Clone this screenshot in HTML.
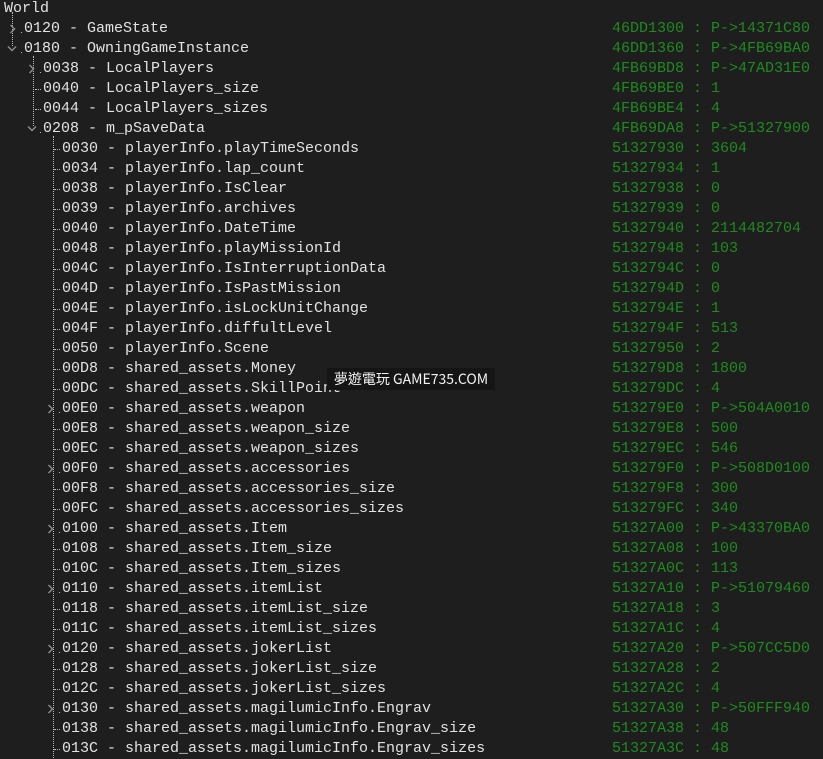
<!DOCTYPE html>
<html><head><meta charset="utf-8"><style>
html,body{margin:0;padding:0;background:#1e1e1e;width:823px;height:758px;overflow:hidden}
#t{position:absolute;left:0;top:-1px;width:823px;font-family:"Liberation Mono",monospace;font-size:15px;color:#e2e2e2}
.r{position:relative;height:20px;line-height:20px;white-space:pre}
.n{position:absolute}
.v{position:absolute;left:612px;color:#1f8a1f}
.vl{position:absolute;border-left:1px dotted #bbb}
.l1 .n{left:24px}.l2 .n{left:43px}.l3 .n{left:62px}
.k .n::before{content:"";position:absolute;left:-8px;top:10px;width:6px;border-top:1px dotted #bbb}
.d .n::before{content:"";position:absolute;left:-3px;top:13px;width:1px;height:1px;background:#bbb}
svg{position:absolute}
.wm{position:absolute;left:327px;top:368px;width:168px;height:22px;background:#151515;color:#f2f2f2;font-family:"Noto Sans CJK TC","Liberation Sans",sans-serif;font-size:14px;line-height:22px;text-align:center}
</style></head><body>
<div class="vl" style="left:12px;top:12px;height:34px"></div>
<div class="vl" style="left:33px;top:56px;height:70px"></div>
<div class="vl" style="left:53px;top:136px;height:622px"></div>
<div id="t">
<div class="r"><span class="n" style="left:4px">World</span></div>
<div class="r l1 d"><svg style="left:9px;top:5px" width="8" height="10"><path d="M1.5 1L5.5 5L1.5 9" stroke="#8a8a8a" stroke-width="1.5" fill="none"/></svg><span class="n">0120 - GameState</span><span class="v">46DD1300 : P-&gt;14371C80</span></div>
<div class="r l1 d"><svg style="left:7px;top:6px" width="10" height="8"><path d="M1 1.5L5 5.5L9 1.5" stroke="#8a8a8a" stroke-width="1.5" fill="none"/></svg><span class="n">0180 - OwningGameInstance</span><span class="v">46DD1360 : P-&gt;4FB69BA0</span></div>
<div class="r l2 d"><svg style="left:28px;top:5px" width="8" height="10"><path d="M1.5 1L5.5 5L1.5 9" stroke="#8a8a8a" stroke-width="1.5" fill="none"/></svg><span class="n">0038 - LocalPlayers</span><span class="v">4FB69BD8 : P-&gt;47AD31E0</span></div>
<div class="r l2 k"><span class="n">0040 - LocalPlayers_size</span><span class="v">4FB69BE0 : 1</span></div>
<div class="r l2 k"><span class="n">0044 - LocalPlayers_sizes</span><span class="v">4FB69BE4 : 4</span></div>
<div class="r l2 d"><svg style="left:27px;top:6px" width="10" height="8"><path d="M1 1.5L5 5.5L9 1.5" stroke="#8a8a8a" stroke-width="1.5" fill="none"/></svg><span class="n">0208 - m_pSaveData</span><span class="v">4FB69DA8 : P-&gt;51327900</span></div>
<div class="r l3 k"><span class="n">0030 - playerInfo.playTimeSeconds</span><span class="v">51327930 : 3604</span></div>
<div class="r l3 k"><span class="n">0034 - playerInfo.lap_count</span><span class="v">51327934 : 1</span></div>
<div class="r l3 k"><span class="n">0038 - playerInfo.IsClear</span><span class="v">51327938 : 0</span></div>
<div class="r l3 k"><span class="n">0039 - playerInfo.archives</span><span class="v">51327939 : 0</span></div>
<div class="r l3 k"><span class="n">0040 - playerInfo.DateTime</span><span class="v">51327940 : 2114482704</span></div>
<div class="r l3 k"><span class="n">0048 - playerInfo.playMissionId</span><span class="v">51327948 : 103</span></div>
<div class="r l3 k"><span class="n">004C - playerInfo.IsInterruptionData</span><span class="v">5132794C : 0</span></div>
<div class="r l3 k"><span class="n">004D - playerInfo.IsPastMission</span><span class="v">5132794D : 0</span></div>
<div class="r l3 k"><span class="n">004E - playerInfo.isLockUnitChange</span><span class="v">5132794E : 1</span></div>
<div class="r l3 k"><span class="n">004F - playerInfo.diffultLevel</span><span class="v">5132794F : 513</span></div>
<div class="r l3 k"><span class="n">0050 - playerInfo.Scene</span><span class="v">51327950 : 2</span></div>
<div class="r l3 k"><span class="n">00D8 - shared_assets.Money</span><span class="v">513279D8 : 1800</span></div>
<div class="r l3 k"><span class="n">00DC - shared_assets.SkillPoint</span><span class="v">513279DC : 4</span></div>
<div class="r l3 d"><svg style="left:47px;top:5px" width="8" height="10"><path d="M1.5 1L5.5 5L1.5 9" stroke="#8a8a8a" stroke-width="1.5" fill="none"/></svg><span class="n">00E0 - shared_assets.weapon</span><span class="v">513279E0 : P-&gt;504A0010</span></div>
<div class="r l3 k"><span class="n">00E8 - shared_assets.weapon_size</span><span class="v">513279E8 : 500</span></div>
<div class="r l3 k"><span class="n">00EC - shared_assets.weapon_sizes</span><span class="v">513279EC : 546</span></div>
<div class="r l3 d"><svg style="left:47px;top:5px" width="8" height="10"><path d="M1.5 1L5.5 5L1.5 9" stroke="#8a8a8a" stroke-width="1.5" fill="none"/></svg><span class="n">00F0 - shared_assets.accessories</span><span class="v">513279F0 : P-&gt;508D0100</span></div>
<div class="r l3 k"><span class="n">00F8 - shared_assets.accessories_size</span><span class="v">513279F8 : 300</span></div>
<div class="r l3 k"><span class="n">00FC - shared_assets.accessories_sizes</span><span class="v">513279FC : 340</span></div>
<div class="r l3 d"><svg style="left:47px;top:5px" width="8" height="10"><path d="M1.5 1L5.5 5L1.5 9" stroke="#8a8a8a" stroke-width="1.5" fill="none"/></svg><span class="n">0100 - shared_assets.Item</span><span class="v">51327A00 : P-&gt;43370BA0</span></div>
<div class="r l3 k"><span class="n">0108 - shared_assets.Item_size</span><span class="v">51327A08 : 100</span></div>
<div class="r l3 k"><span class="n">010C - shared_assets.Item_sizes</span><span class="v">51327A0C : 113</span></div>
<div class="r l3 d"><svg style="left:47px;top:5px" width="8" height="10"><path d="M1.5 1L5.5 5L1.5 9" stroke="#8a8a8a" stroke-width="1.5" fill="none"/></svg><span class="n">0110 - shared_assets.itemList</span><span class="v">51327A10 : P-&gt;51079460</span></div>
<div class="r l3 k"><span class="n">0118 - shared_assets.itemList_size</span><span class="v">51327A18 : 3</span></div>
<div class="r l3 k"><span class="n">011C - shared_assets.itemList_sizes</span><span class="v">51327A1C : 4</span></div>
<div class="r l3 d"><svg style="left:47px;top:5px" width="8" height="10"><path d="M1.5 1L5.5 5L1.5 9" stroke="#8a8a8a" stroke-width="1.5" fill="none"/></svg><span class="n">0120 - shared_assets.jokerList</span><span class="v">51327A20 : P-&gt;507CC5D0</span></div>
<div class="r l3 k"><span class="n">0128 - shared_assets.jokerList_size</span><span class="v">51327A28 : 2</span></div>
<div class="r l3 k"><span class="n">012C - shared_assets.jokerList_sizes</span><span class="v">51327A2C : 4</span></div>
<div class="r l3 d"><svg style="left:47px;top:5px" width="8" height="10"><path d="M1.5 1L5.5 5L1.5 9" stroke="#8a8a8a" stroke-width="1.5" fill="none"/></svg><span class="n">0130 - shared_assets.magilumicInfo.Engrav</span><span class="v">51327A30 : P-&gt;50FFF940</span></div>
<div class="r l3 k"><span class="n">0138 - shared_assets.magilumicInfo.Engrav_size</span><span class="v">51327A38 : 48</span></div>
<div class="r l3 k"><span class="n">013C - shared_assets.magilumicInfo.Engrav_sizes</span><span class="v">51327A3C : 48</span></div>
</div>
<div class="wm">夢遊電玩 GAME735.COM</div>
</body></html>
